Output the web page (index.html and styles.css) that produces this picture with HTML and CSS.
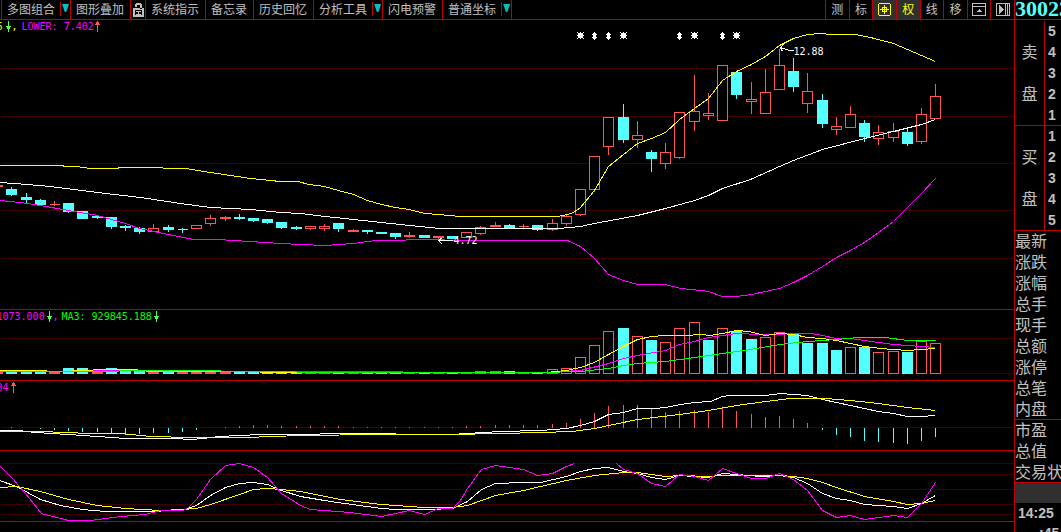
FILE: index.html
```html
<!DOCTYPE html>
<html lang="zh-CN">
<head>
<meta charset="utf-8">
<title>行情走势</title>
<link rel="stylesheet" href="styles.css">
</head>
<body>
<div class="terminal">
  <main class="main">
    <nav class="toolbar" aria-label="工具栏">
      <div class="menus">
        <button class="menu">多图组合<span class="caret"></span></button>
        <button class="menu">图形叠加</button>
        <button class="menu menu-icon" aria-label="锁定">
          <svg width="12" height="16" viewBox="0 0 12 16" fill="currentColor" shape-rendering="crispEdges">
            <path d="M3 1h5v1h1v5H7V3H4v2H2V2h1zM0 6h11v9H0zM2 8v5h7V8z" fill-rule="evenodd"/>
            <path d="M3 9h5v1H3zM5 10h1v3H5zM3 12h5v1H3z"/>
          </svg>
        </button>
        <button class="menu">系统指示</button>
        <button class="menu">备忘录</button>
        <button class="menu">历史回忆</button>
        <button class="menu">分析工具<span class="caret"></span></button>
        <button class="menu">闪电预警</button>
        <button class="menu menu-last">普通坐标<span class="caret"></span></button>
      </div>
      <div class="tools">
        <button class="tool">测</button>
        <button class="tool">标</button>
        <button class="tool tool-on" aria-label="十字光标">
          <svg width="13" height="13" viewBox="0 0 13 13" fill="none" stroke="currentColor" shape-rendering="crispEdges">
            <path d="M1 .5h11M1 12.500h11M.5 1v11M12.500 1v11M2 6.500h9M6.500 2v9M4.500 4.500h4v4h-4z"/>
          </svg>
        </button>
        <button class="tool tool-on">权</button>
        <button class="tool">线</button>
        <button class="tool">移</button>
        <button class="tool" aria-label="窗口">
          <svg width="14" height="13" viewBox="0 0 14 13" fill="none" stroke="currentColor" shape-rendering="crispEdges">
            <path d="M.5.5h13v12H.5zM1 3.500h12"/>
            <path d="M4 9h6L7 6z" fill="currentColor" stroke="none"/>
          </svg>
        </button>
        <button class="tool" aria-label="展开">
          <svg width="14" height="13" viewBox="0 0 14 13" fill="none" stroke="currentColor" shape-rendering="crispEdges">
            <path d="M.5.5h13v12H.5zM9.500 1v11M11.500 1v11"/>
            <path d="M3 2v9l5-4.500z" fill="currentColor" stroke="none"/>
          </svg>
        </button>
      </div>
    </nav>

    <section class="panel">
      <svg class="plot plot-price" role="img" aria-label="K线图">
        <defs>
          <path id="star" d="M-2.500-2.500h5v5h-5zM-3.500-3.500h1v1h-1zM2.500-3.500h1v1h-1zM-3.500 2.500h1v1h-1zM2.500 2.500h1v1h-1zM-3.500-.5h7v1h-7zM-.5-3.500h1v7h-1z"/>
          <path id="gem" d="M-1.500-2.500h3v6h-3zM-2.500-1.500h5v1h-5zM-2.500 1.500h5v1h-5zM-.5-3.500h1v8h-1z"/>
        </defs>
        <g transform="translate(0.500 -19.500)">
          <g class="grid">
            <line x2="100%" y1="68" y2="68"/><line x2="100%" y1="116" y2="116"/>
            <line x2="100%" y1="163" y2="163"/><line x2="100%" y1="210" y2="210"/>
            <line x2="100%" y1="258" y2="258"/>
          </g>
          <g id="candles"></g>
          <polyline class="yellow" points="-1,165 60,165 66,166 76,166 90,168 116,168 120,167 160,167 165,168 185,168 210,172 250,178 280,181 298,181 308,184 324,186 338,190 353,194 367,200 381,204 395,207 409,209 424,213 438,214 460,216 557,216 567,214 573,212 580,207 594,190 608,166 623,154 637,143 651,138 665,132 679,119 694,108 708,98 722,80 736,71 751,64 765,56 779,45 793,38 807,34 820,33 830,34 855,34 870,37 893,43 907,49 921,55 935,61"/>
          <polyline class="white" points="-1,182 14,183 50,186 97,192 140,197 180,203 210,207 250,209 280,212 300,213 325,216 353,219 381,222 409,225 440,228 558,228 580,226 594,223 610,220 637,215 665,208 694,200 708,195 722,188 750,179 779,166 793,160 822,149 864,138 893,131 921,124 935,119"/>
          <polyline class="magenta" points="-1,200 20,202 40,205 68,210 97,215 111,219 125,223 139,228 168,234 193,239 217,239 250,241 280,243 300,244 325,245 353,243 375,240 438,239 450,240 567,240 580,246 594,258 608,274 623,280 637,284 665,284 680,288 700,290 708,291 722,296 736,296 751,294 765,291 779,288 793,282 807,275 822,266 836,257 850,250 864,242 878,232 893,221 907,207 921,193 935,178"/>
          <g class="marks">
            <use href="#star" x="580" y="35"/><use href="#gem" x="594" y="35"/><use href="#gem" x="608" y="35"/><use href="#star" x="623" y="35"/>
            <use href="#gem" x="679" y="35"/><use href="#star" x="694" y="35"/><use href="#gem" x="722" y="35"/><use href="#star" x="736" y="35"/>
          </g>
          <path class="white" d="M793 50h-4l-9-3M783 44l-3 3 2 4M452 240h-14M442 237l-4 3 4 4"/>
          <text class="note" x="793" y="54">12.88</text>
          <text class="note" x="453" y="243">4.72</text>
          <text class="note fill-yellow" x="-4" y="29">6</text>
          <path class="down" d="M8 20v11M5.500 26h5M6.500 27h3M6.500 28h3"/>
          <text class="note fill-yellow" x="11" y="29">,</text>
          <text class="note fill-magenta" x="21" y="29">LOWER: 7.402</text>
          <path class="up" d="M97 20v11M94.500 24h5M95.500 23h3M95.500 22h3"/>
        </g>
      </svg>
    </section>

    <section class="panel">
      <svg class="plot plot-volume" role="img" aria-label="成交量">
        <g transform="translate(0.500 -309.500)">
          <g class="grid">
            <line x2="100%" y1="338" y2="338"/><line x2="100%" y1="373" y2="373"/>
          </g>
          <g id="volume"></g>
          <polyline class="magenta" points="-1,371 60,371 104,370 200,371 260,371 545,372 580,370 608,363 623,358 637,355 665,350 679,344 694,341 708,337 722,335 736,333 760,334 810,333 822,335 836,338 850,338 864,340 893,344 921,346 935,347"/>
          <polyline class="yellow" points="-1,370 33,370 60,371 104,369 133,369 150,371 218,371 300,372 545,372 566,370 580,367 594,362 608,354 623,346 637,339 651,336 665,335 685,335 700,334 710,335 722,333 736,330 748,331 765,335 779,333 793,334 807,337 822,338 836,340 850,343 864,346 880,348 907,350 935,348"/>
          <polyline class="green" points="-1,371 104,371 133,370 180,370 260,371 330,372 540,372 580,371 608,368 623,365 637,363 665,361 694,357 722,353 750,349 779,344 807,341 836,339 858,337 885,337 907,340 935,340"/>
          <text class="note fill-magenta" x="-4" y="319">1073.000</text>
          <path class="down" d="M49 310v11M46.500 316h5M47.500 317h3M47.500 318h3"/>
          <text class="note fill-magenta" x="52" y="319">,</text>
          <text class="note fill-green" x="61" y="319">MA3: 929845.188</text>
          <path class="down" d="M156 310v11M153.500 316h5M154.500 317h3M154.500 318h3"/>
        </g>
      </svg>
    </section>

    <section class="panel">
      <svg class="plot plot-macd" role="img" aria-label="MACD">
        <g transform="translate(0.500 -380.500)">
          <g class="grid"><line x2="100%" y1="427" y2="427"/></g>
          <g id="macd"></g>
          <polyline class="white" points="-1,430 18,430 35,432 68,434 97,436 125,438 175,438 190,439 203,438 218,436 240,435 260,434 300,434 340,433 450,434 500,431 540,430 566,428 580,425 594,421 608,414 623,412 637,408 655,408 665,407 680,404 694,402 710,401 722,396 730,395 765,395 780,393 793,394 807,395 822,399 836,402 864,408 878,411 893,413 907,416 920,416 935,415"/>
          <polyline class="yellow" points="-1,431 40,431 90,433 120,433 150,436 190,437 245,437 300,435 380,434 450,434 500,433 540,432 572,431 594,428 637,419 679,414 708,410 736,405 765,401 790,398 825,398 850,400 878,403 907,407 935,410"/>
          <text class="note fill-magenta" x="-4" y="390">04</text>
          <path class="up" d="M13 381v11M10.500 385h5M11.500 384h3M11.500 383h3"/>
        </g>
      </svg>
    </section>

    <section class="panel">
      <svg class="plot plot-kdj" role="img" aria-label="KDJ">
        <g transform="translate(0.500 -450.500)">
          <g class="grid">
            <line x2="100%" y1="463" y2="463"/><line x2="100%" y1="474" y2="474"/>
            <line x2="100%" y1="489" y2="489"/><line x2="100%" y1="504" y2="504"/>
            <line x2="100%" y1="514" y2="514"/>
          </g>
          <polyline class="white" points="-1,480 16,486 40,499 60,505 82,509 105,511 140,511 182,510 196,505 210,495 225,487 239,483 253,482 267,484 281,490 300,496 330,501 381,508 395,509 430,509 452,508 467,501 481,489 495,483 523,482 540,482 566,476 580,471 594,468 608,467 623,471 637,473 651,477 665,479 679,475 708,477 722,473 736,474 760,476 779,475 793,477 807,483 822,493 836,498 850,500 864,504 893,506 907,508 921,503 935,495"/>
          <polyline class="yellow" points="-1,487 16,486 40,491 68,499 97,505 125,508 160,510 182,509 196,508 210,504 239,494 253,489 267,488 281,489 300,491 340,499 381,504 424,507 452,507 467,505 481,500 495,495 523,490 540,486 566,480 594,475 623,472 637,472 651,474 665,476 680,475 708,476 722,475 779,475 793,476 807,478 822,482 836,487 864,496 893,501 907,504 921,503 935,500"/>
          <polyline class="magenta" points="-1,465 12,478 25,493 41,513 68,520 90,520 120,516 145,514 160,510 182,510 187,508 196,499 210,479 225,465 239,463 253,467 267,477 281,493 300,505 310,509 350,512 381,516 395,513 409,510 424,514 438,508 452,508 460,500 467,488 481,469 495,465 509,467 523,469 537,475 552,473 566,466 574,463"/>
          <polyline class="magenta" points="616,463 623,469 637,473 651,483 665,486 679,474 694,476 708,480 722,468 736,473 751,478 765,478 779,473 793,479 807,490 822,510 836,517 850,515 864,519 893,515 907,517 921,503 935,482"/>
        </g>
      </svg>
    </section>
  </main>

  <aside class="side">
    <h1 class="code">300233</h1>
    <div class="books">
      <div class="book">
        <div class="book-name"><span class="first">卖</span><span class="second">盘</span></div>
        <ol class="levels"><li>5</li><li>4</li><li>3</li><li>2</li><li>1</li></ol>
      </div>
      <div class="book">
        <div class="book-name"><span class="first">买</span><span class="second">盘</span></div>
        <ol class="levels"><li>1</li><li>2</li><li>3</li><li>4</li><li>5</li></ol>
      </div>
    </div>
    <ul class="facts">
      <li>最新</li><li>涨跌</li><li>涨幅</li><li>总手</li><li>现手</li><li>总额</li><li>涨停</li><li>总笔</li><li class="rule">内盘</li>
      <li>市盈</li><li>总值</li><li class="rule">交易状</li>
    </ul>
    <div class="band"></div>
    <div class="ticks"><time>14:25</time><time class="later">:45</time></div>
  </aside>
</div>
<script src="script.js"></script>
</body>
</html>
```

FILE: styles.css
```css
* { box-sizing: border-box; }

body {
  margin: 0;
  background: #000;
  color: #c0c0c0;
  font-family: "Liberation Sans", "Noto Sans CJK SC", sans-serif;
}

.terminal {
  display: grid;
  grid-template-columns: minmax(0, 1fr) 47px;
  height: 100vh;
  overflow: hidden;
}

.main { min-width: 0; }

.toolbar {
  display: flex;
  justify-content: space-between;
  height: 20px;
  border-bottom: 1px solid #c00000;
}

.menus { display: flex; padding-left: 1px; }

.menu, .tool {
  display: flex;
  align-items: center;
  border: 0;
  border-left: 1px solid #c00000;
  background: #000;
  color: #c0c0c0;
  font-family: "Noto Sans CJK SC", sans-serif;
  font-size: 12px;
  line-height: 16px;
  white-space: nowrap;
}

.menu { padding: 0 6px 1px 5px; }
.menu:has(.caret) { padding-right: 0; }
.menu-icon { padding: 0 0 0 2px; }
.menu-last { border-right: 1px solid #c00000; }

.caret {
  align-self: flex-start;
  width: 10px;
  height: 14px;
  margin: 2px 0 0 5px;
  border-left: 1px solid #c00000;
}

.caret::before {
  content: "";
  display: block;
  width: 7px;
  height: 8px;
  margin: 2px 0 0 1px;
  background: #00c0c0;
  clip-path: polygon(0 0, 100% 0, 60% 100%, 40% 100%);
}

.tools {
  display: grid;
  grid-template-columns: repeat(8, minmax(0, 1fr));
  width: 189px;
}

.tool { justify-content: center; padding: 0 0 1px; }
.tool-on { background: #303030; color: #ff0; }

.panel { border-bottom: 1px solid #c00000; }

.plot {
  display: block;
  width: 100%;
  overflow: hidden;
  fill: none;
  stroke-width: 1px;
  shape-rendering: crispEdges;
}

.plot-price { height: 289px; }
.plot-volume, .plot-kdj { height: 70px; }
.plot-macd { height: 69px; }

.grid { stroke: #400000; }
.yellow { stroke: #ff0; }
.white { stroke: #fff; }
.marks { fill: #fff; }
.magenta { stroke: #f0f; }
.green { stroke: #0f0; }
.rise { stroke: #ff5454; fill: #000; }
.fall { stroke: #54ffff; fill: #54ffff; }
.up { stroke: #ff5454; }
.down { stroke: #54ff54; }

.note {
  fill: #fff;
  font-family: "DejaVu Sans Mono", monospace;
  font-size: 10px;
}
.fill-yellow { fill: #ff0; }
.fill-magenta { fill: #f0f; }
.fill-green { fill: #0f0; }

.side {
  overflow: hidden;
  border-left: 1px solid #c00000;
}

.code {
  height: 20px;
  margin: 0;
  border-bottom: 1px solid #c00000;
  color: #54ffff;
  font: bold 22px/18px "Liberation Serif", serif;
}

.books { padding-top: 1px; }

.book {
  display: grid;
  grid-template-columns: 30px 1fr;
  height: 105px;
  border-bottom: 1px solid #c00000;
}

.book-name {
  display: grid;
  grid-template-rows: repeat(5, 21px);
  justify-items: center;
  height: 104px;
  border-right: 1px solid #c00000;
  font-size: 16px;
  line-height: 21px;
}
.first { grid-row: 2; }
.second { grid-row: 4; }

.levels, .facts { margin: 0; padding: 0; list-style: none; }

.levels { padding-left: 3px; font: bold 14px/21px "Liberation Sans", sans-serif; }

.facts {
  font-size: 16px;
  line-height: 21px;
  white-space: nowrap;
}
.facts li { height: 21px; }
.facts .rule { border-bottom: 1px solid #c00000; }

.band { height: 20px; background: #303030; }

.ticks {
  display: grid;
  padding-left: 3px;
  font: bold 14px/20px "Liberation Sans", sans-serif;
}
.later { padding-left: 21px; }
```

FILE: script.js
```js
// x, direction, high, body top, body bottom, low, volume top, volume direction
const bars = [
  [-3, 1, 185, 185, 186, 186, 372], [11, 0, 186, 189, 194, 195, 372],
  [26, 0, 192, 197, 199, 202, 372], [40, 0, 198, 200, 204, 204, 372],
  [54, 1, 200, 204, 204, 205, 372], [68, 0, 202, 203, 211, 212, 368],
  [82, 0, 211, 211, 218, 218, 368], [97, 0, 214, 216, 217, 218, 372, 1],
  [111, 0, 216, 217, 226, 228, 368], [125, 0, 224, 226, 227, 230, 371],
  [139, 0, 226, 228, 231, 233, 371], [153, 1, 223, 228, 231, 231, 372],
  [168, 0, 224, 227, 229, 231, 371], [182, 0, 227, 229, 229, 232, 372, 1],
  [196, 1, 225, 225, 228, 228, 372], [210, 1, 214, 218, 223, 225, 372],
  [225, 1, 215, 217, 218, 220, 372], [239, 0, 213, 217, 218, 219, 372],
  [253, 0, 217, 218, 220, 221, 372], [267, 0, 219, 219, 222, 223, 372],
  [281, 0, 222, 222, 227, 228, 372], [296, 0, 225, 227, 228, 229, 372],
  [310, 1, 226, 226, 228, 229, 372], [324, 1, 223, 226, 228, 230, 372],
  [338, 0, 223, 223, 228, 231, 372], [353, 1, 228, 230, 231, 231, 372],
  [367, 0, 229, 230, 231, 233, 372], [381, 0, 231, 232, 233, 233, 372],
  [395, 0, 232, 233, 236, 238, 372], [409, 1, 231, 235, 236, 237, 372],
  [424, 0, 234, 235, 237, 237, 372], [438, 1, 236, 236, 237, 238, 372],
  [452, 0, 236, 236, 238, 238, 372], [466, 1, 232, 232, 237, 237, 372],
  [480, 1, 225, 227, 233, 234, 371], [495, 1, 221, 225, 226, 226, 371],
  [509, 0, 223, 225, 227, 227, 371], [523, 1, 223, 226, 226, 228, 372],
  [537, 0, 224, 225, 229, 230, 372], [552, 1, 218, 223, 229, 230, 369],
  [566, 1, 213, 216, 223, 225, 368], [580, 1, 189, 189, 214, 215, 357],
  [594, 1, 156, 156, 189, 191, 345], [608, 1, 117, 117, 146, 154, 331],
  [623, 0, 103, 117, 139, 142, 328], [637, 1, 120, 135, 139, 147, 336],
  [651, 0, 149, 152, 158, 171, 340], [665, 1, 142, 152, 163, 168, 342],
  [679, 1, 112, 112, 157, 158, 328], [694, 1, 74, 111, 121, 130, 322],
  [708, 1, 92, 113, 115, 119, 340, 0], [722, 1, 65, 65, 120, 120, 328],
  [736, 0, 72, 72, 94, 98, 331], [751, 1, 81, 99, 101, 113, 339, 0],
  [765, 1, 68, 92, 113, 113, 337], [779, 1, 48, 65, 89, 89, 332],
  [793, 0, 57, 71, 86, 91, 334], [807, 1, 72, 91, 103, 112, 343, 0],
  [822, 0, 93, 100, 123, 127, 343], [836, 1, 116, 126, 129, 134, 350, 0],
  [850, 1, 105, 114, 127, 127, 347], [864, 0, 119, 123, 136, 141, 347],
  [878, 1, 124, 132, 138, 144, 352], [893, 1, 122, 131, 137, 141, 351],
  [907, 0, 126, 132, 143, 145, 352], [921, 1, 107, 114, 141, 143, 341],
  [935, 1, 83, 96, 118, 118, 343]
];

// Histogram end for each bar; the zero line is at 427
const histogram = [
  427, 426, 427, 428, 429, 430, 431, 431, 433, 434, 433, 432, 432, 431, 429, 427,
  426, 425, 424, 424, 425, 425, 425, 425, 425, 426, 426, 426, 426, 426, 426, 426,
  426, 425, 425, 424, 424, 424, 424, 423, 422, 418, 412, 405, 404, 404, 408, 411,
  410, 409, 411, 407, 410, 413, 416, 415, 418, 422, 429, 434, 436, 440, 441, 442,
  443, 440, 436
];

function draw(id, className, d) {
  const path = document.createElementNS("http://www.w3.org/2000/svg", "path");
  path.setAttribute("class", className);
  path.setAttribute("d", d);
  document.getElementById(id).append(path);
}

const zero = 427;
bars.forEach(([x, up, high, top, bottom, low, volume, volumeUp = up], i) => {
  const box = (y1, y2) => `M${x - 5} ${y1}h10V${y2}h-10z`;
  draw("candles", up ? "rise" : "fall", `M${x} ${high}V${top}${box(top, bottom)}M${x} ${bottom}V${low}`);
  draw("volume", volumeUp ? "rise" : "fall", box(volume, 373));
  const end = histogram[i];
  draw("macd", end < zero ? "rise" : "fall", `M${x} ${zero}V${end}`);
});
```
